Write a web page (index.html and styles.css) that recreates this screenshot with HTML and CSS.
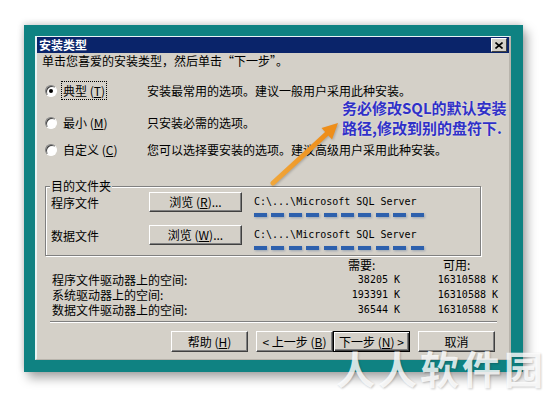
FILE: index.html
```html
<!DOCTYPE html>
<html lang="zh-CN">
  <head>
    <meta charset="UTF-8" />
    <title>安装类型</title>
    <link rel="stylesheet" href="styles.css">
  </head>
  <body>
    <div class="page">
      <div class="frame">
        <div class="dialog">
          <div class="titlebar">
            <span class="title">安装类型</span>
            <span class="close">
              <svg width="8" height="7" viewBox="0 0 8 7"><path d="M0.5 0.5 L7.5 6.5 M7.5 0.5 L0.5 6.5" stroke="#000" stroke-width="1.6" /></svg>
            </span>
          </div>
          <p class="intro">单击您喜爱的安装类型，然后单击“下一步”。</p>

          <div class="options">
            <div class="option">
              <span class="radio checked"></span>
              <span class="option-label"><span class="focus">典型 (<u>T</u>)</span></span>
              <span class="option-desc">安装最常用的选项。建议一般用户采用此种安装。</span>
            </div>
            <div class="option">
              <span class="radio"></span>
              <span class="option-label">最小 (<u>M</u>)</span>
              <span class="option-desc">只安装必需的选项。</span>
            </div>
            <div class="option">
              <span class="radio"></span>
              <span class="option-label">自定义 (<u>C</u>)</span>
              <span class="option-desc">您可以选择要安装的选项。建议高级用户采用此种安装。</span>
            </div>
          </div>

          <fieldset class="folders">
            <legend>目的文件夹</legend>
            <div class="folder-row">
              <span class="folder-name">程序文件</span>
              <button class="btn browse">浏览 (<u>R</u>)...</button>
              <span class="path">C:\...\Microsoft SQL Server</span>
            </div>
            <div class="folder-row">
              <span class="folder-name">数据文件</span>
              <button class="btn browse">浏览 (<u>W</u>)...</button>
              <span class="path">C:\...\Microsoft SQL Server</span>
            </div>
          </fieldset>

          <div class="space">
            <span></span>
            <span class="head need">需要:</span>
            <span class="head avail">可用:</span>

            <span>程序文件驱动器上的空间:</span>
            <span class="num">38205 K</span>
            <span class="num">16310588 K</span>

            <span>系统驱动器上的空间:</span>
            <span class="num">193391 K</span>
            <span class="num">16310588 K</span>

            <span>数据文件驱动器上的空间:</span>
            <span class="num">36544 K</span>
            <span class="num">16310588 K</span>
          </div>

          <div class="separator"></div>

          <div class="actions">
            <button class="btn">帮助 (<u>H</u>)</button>
            <button class="btn spaced">&lt; 上一步 (<u>B</u>)</button>
            <button class="btn default">下一步 (<u>N</u>) &gt;</button>
            <button class="btn spaced">取消</button>
          </div>
        </div>
      </div>

      <svg class="arrow" width="85" height="80" viewBox="0 0 85 80">
        <defs>
          <linearGradient id="orange" x1="0" y1="1" x2="1" y2="0">
            <stop offset="0" stop-color="#f0a63a" />
            <stop offset="1" stop-color="#ee8e1a" />
          </linearGradient>
        </defs>
        <line x1="11" y1="68" x2="65" y2="18.5" stroke="url(#orange)" stroke-width="5" stroke-linecap="round" />
        <polygon points="76,8 70,24.5 59.5,13" fill="#ee8e1a" />
      </svg>

      <div class="note">务必修改SQL的默认安装<br>路径,修改到别的盘符下.</div>

      <div class="watermark">人人软件园</div>
    </div>
  </body>
</html>
```

FILE: styles.css
```css
body {
  margin: 0;
  background-color: #ffffff;
  font-family: "Noto Sans CJK SC", "Liberation Sans", sans-serif;
  font-size: 12px;
  color: #000000;
}

.page {
  position: relative;
  width: 549px;
  height: 398px;
  padding: 25px 0 0 24px;
  box-sizing: border-box;
}

.frame {
  width: 499px;
  height: 347px;
  box-sizing: border-box;
  padding: 11px 12px 12px 11px;
  background-color: #0f8282;
  box-shadow: 4px 6px 10px rgba(0, 0, 0, 0.35), -1px -2px 6px rgba(0, 0, 0, 0.15);
}

.dialog {
  height: 100%;
  box-sizing: border-box;
  background-color: #d4d0c8;
  border-left: 2px solid #e6f4f4;
  border-top: 1px solid #e6f4f4;
  border-right: 2px solid #b8b4ac;
  border-bottom: 1px solid #b8b4ac;
}

.titlebar {
  height: 16px;
  background-color: #0a246a;
  display: flex;
  align-items: center;
  justify-content: space-between;
  padding: 0 2px 0 2px;
}

.title {
  color: #ffffff;
  font-weight: bold;
  line-height: 16px;
}

.close {
  width: 14px;
  height: 12px;
  display: flex;
  align-items: center;
  justify-content: center;
  background-color: #d4d0c8;
  border: 1px solid;
  border-color: #ffffff #404040 #404040 #ffffff;
}

.intro {
  margin: 0;
  padding-left: 5px;
  line-height: 16px;
  height: 16px;
}

.options {
  padding-top: 14px;
}

.option {
  display: flex;
  align-items: center;
  height: 16px;
  padding-left: 8px;
}

.option + .option {
  margin-top: 16px;
}

.option:last-child {
  margin-top: 11px;
}

.radio {
  width: 10px;
  height: 10px;
  border-radius: 50%;
  background-color: #ffffff;
  border: 1px solid;
  border-color: #808080 #ffffff #ffffff #808080;
  box-shadow: inset 1px 1px 0 #404040;
  display: flex;
  align-items: center;
  justify-content: center;
  margin-right: 6px;
}

.radio.checked::after {
  content: "";
  width: 4px;
  height: 4px;
  border-radius: 50%;
  background-color: #000000;
}

.option-label {
  width: 84px;
  line-height: 16px;
}

.focus {
  outline: 1px dotted #000000;
  padding: 0 1px;
  margin-left: -1px;
}

.option-desc {
  line-height: 16px;
}

.folders {
  margin: 22px 28px 0 8px;
  padding: 0 5px 10px 5px;
  border: 1px solid #808080;
  box-shadow: inset 1px 1px 0 #ffffff, 1px 1px 0 #ffffff;
}

.folders legend {
  padding: 0 1px;
  margin-left: -1px;
  line-height: 12px;
  background-color: #d4d0c8;
}

.folder-row {
  display: flex;
  align-items: center;
  height: 20px;
}

.folder-row + .folder-row {
  margin-top: 13px;
}

.folder-name {
  width: 98px;
}

.btn {
  font-family: "Noto Sans CJK SC", "Liberation Sans", sans-serif;
  font-size: 12px;
  color: #000000;
  background-color: #d4d0c8;
  border: 1px solid;
  border-color: #ffffff #404040 #404040 #ffffff;
  box-shadow: inset -1px -1px 0 #808080;
  padding: 0;
  line-height: 14px;
}

.browse {
  width: 93px;
  height: 20px;
}

.path {
  position: relative;
  margin-left: 12px;
  font-family: "DejaVu Sans Mono", monospace;
  font-size: 10px;
  line-height: 14px;
}

.path::after {
  content: "";
  position: absolute;
  left: 0;
  top: 18px;
  width: 174px;
  height: 4px;
  background: repeating-linear-gradient(90deg, #2d60ad 0 13px, transparent 13px 17.4px);
  filter: drop-shadow(1px 1px 1px rgba(40, 80, 140, 0.35));
}

.space {
  display: grid;
  grid-template-columns: 248px 100px 98px;
  grid-auto-rows: 15px;
  line-height: 15px;
  margin: 1px 0 0 15px;
}

.head {
  text-align: left;
}

.need {
  padding-left: 48px;
}

.avail {
  padding-left: 43px;
}

.num {
  text-align: right;
  font-family: "DejaVu Sans Mono", monospace;
  font-size: 10px;
}

.separator {
  margin: 4px 12px 0 13px;
  border-top: 1px solid #808080;
  border-bottom: 1px solid #ffffff;
}

.actions {
  display: flex;
  justify-content: flex-end;
  margin-top: 8px;
  padding-right: 14px;
}

.actions .btn {
  width: 77px;
  height: 21px;
}

.actions .spaced {
  margin-left: 8px;
}

.actions .default {
  border-color: #000000;
  box-shadow: inset 1px 1px 0 #ffffff, inset -1px -1px 0 #404040, inset -2px -2px 0 #808080;
}

.arrow {
  position: absolute;
  left: 262px;
  top: 115px;
  filter: drop-shadow(1px 1px 1px rgba(0, 0, 0, 0.2));
}

.note {
  position: absolute;
  left: 342px;
  top: 98px;
  font-size: 15px;
  font-weight: bold;
  line-height: 20px;
  color: #3030c8;
  text-shadow: 0 0 2px rgba(255, 255, 255, 0.7);
}

.watermark {
  position: absolute;
  left: 336px;
  top: 351px;
  font-size: 39px;
  font-weight: bold;
  line-height: 32px;
  letter-spacing: 3px;
  color: rgba(255, 255, 255, 0.82);
  text-shadow: 1px 1px 2px rgba(0, 0, 0, 0.2);
}
```
